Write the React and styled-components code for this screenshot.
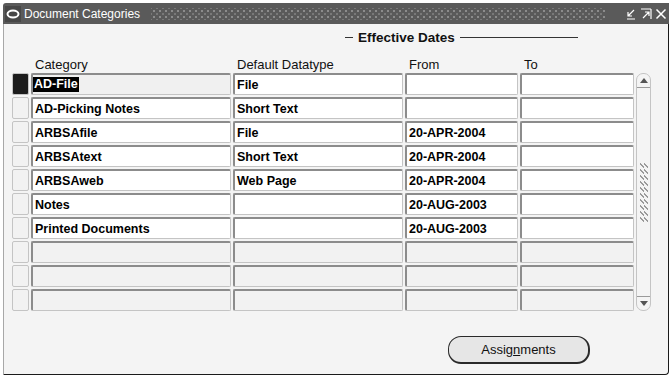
import React from "react";
import styled, { createGlobalStyle } from "styled-components";

const GlobalStyle = createGlobalStyle`
  html, body {
    margin: 0;
    padding: 0;
    background: #ffffff;
    font-family: "Liberation Sans", Arial, sans-serif;
  }
`;

const Page = styled.div`
  width: 672px;
  height: 377px;
  padding: 3px 3px 2px 3px;
  box-sizing: border-box;
  display: flex;
`;

const Window = styled.div`
  flex: 1;
  display: flex;
  flex-direction: column;
  border-top-left-radius: 3px;
  overflow: hidden;
`;

const TitleBar = styled.div`
  height: 21px;
  background: #5a5a5a;
  display: flex;
  align-items: center;
  padding: 0 2px 0 2px;
  gap: 3px;
  color: #ffffff;
`;

const AppIcon = styled.div`
  width: 16px;
  height: 16px;
  background: #474747;
  display: flex;
  align-items: center;
  justify-content: center;
`;

const Title = styled.span`
  font-size: 12px;
  white-space: nowrap;
`;

const Dots = styled.div`
  flex: 1;
  height: 12px;
  margin: 0 16px 0 8px;
  background-image: radial-gradient(circle, #a8a8a8 0.6px, transparent 0.9px),
    radial-gradient(circle, #8a8a8a 0.6px, transparent 0.9px);
  background-size: 6px 6px, 6px 6px;
  background-position: 0 0, 3px 3px;
`;

const TitleButtons = styled.div`
  display: flex;
  gap: 3px;
  align-items: center;
`;

const Body = styled.div`
  flex: 1;
  background: #f4f4f4;
  border-left: 1px solid #a8a8a8;
  border-right: 1px solid #1a1a1a;
  border-bottom: 1px solid #1a1a1a;
  border-bottom-right-radius: 4px;
  display: flex;
  flex-direction: column;
  padding: 6px 0 0 8px;
`;

const GroupHeader = styled.div`
  display: flex;
  align-items: center;
  margin-left: 333px;
  height: 14px;
  gap: 5px;
  font-size: 13.5px;
  font-weight: bold;
  color: #111;
`;

const Rule = styled.span`
  display: block;
  width: ${(p) => p.w}px;
  height: 1px;
  background: #333;
`;

const HeaderRow = styled.div`
  display: grid;
  grid-template-columns: 17px 200px 170px 113px 114px;
  column-gap: 2px;
  margin-top: 13px;
  height: 16px;
  font-size: 13px;
  color: #111;
`;

const HeaderCell = styled.div`
  padding-left: 4px;
  line-height: 16px;
`;

const TableArea = styled.div`
  display: flex;
  gap: 2px;
`;

const Rows = styled.div`
  display: flex;
  flex-direction: column;
  gap: 2px;
`;

const Row = styled.div`
  display: grid;
  grid-template-columns: 17px 200px 170px 113px 114px;
  column-gap: 2px;
  height: 22px;
`;

const Indicator = styled.div`
  box-sizing: border-box;
  border: 1px solid #c4c4c4;
  border-radius: 2px;
  background: ${(p) => (p.current ? "#1c1c1c" : "#f2f2f2")};
`;

const Field = styled.div`
  box-sizing: border-box;
  background: ${(p) => (p.empty ? "#f2f2f2" : p.current ? "#f0f0f0" : "#ffffff")};
  border-top: 2px solid #8c8c8c;
  border-left: 2px solid #8c8c8c;
  border-bottom: 1px solid #c4c4c4;
  border-right: 1px solid #c4c4c4;
  border-radius: 2px;
  font-size: 12.5px;
  font-weight: bold;
  color: #000;
  padding-left: ${(p) => (p.current ? 0 : 2)}px;
  display: flex;
  align-items: center;
  white-space: nowrap;
  overflow: hidden;
`;

const Selected = styled.span`
  background: #000;
  color: #fff;
  padding: 0 1px;
  line-height: 15px;
`;

const Scrollbar = styled.div`
  width: 15px;
  box-sizing: border-box;
  border: 1px solid #c4c4c4;
  border-radius: 7px;
  display: flex;
  flex-direction: column;
  align-items: center;
  justify-content: space-between;
`;

const ScrollEnd = styled.div`
  width: 100%;
  height: 13px;
  display: flex;
  align-items: center;
  justify-content: center;
  border-${(p) => (p.top ? "bottom" : "top")}: 1px solid #9a9a9a;
`;

const Grip = styled.div`
  width: 8px;
  height: 60px;
  background-image: linear-gradient(45deg, transparent 40%, #9a9a9a 40%, #9a9a9a 60%, transparent 60%);
  background-size: 4px 6px;
`;

const ButtonRow = styled.div`
  display: flex;
  justify-content: flex-start;
  padding-left: 436px;
  margin-top: 25px;
`;

const Button = styled.div`
  width: 142px;
  height: 28px;
  box-sizing: border-box;
  border: 1px solid #2a2a2a;
  border-right-width: 2px;
  border-bottom-width: 2px;
  border-radius: 13px;
  background: #e6e6e6;
  display: flex;
  align-items: center;
  justify-content: center;
  font-size: 13px;
  color: #111;
  u {
    text-decoration-thickness: 1px;
  }
`;

const data = [
  ["AD-File", "File", "", ""],
  ["AD-Picking Notes", "Short Text", "", ""],
  ["ARBSAfile", "File", "20-APR-2004", ""],
  ["ARBSAtext", "Short Text", "20-APR-2004", ""],
  ["ARBSAweb", "Web Page", "20-APR-2004", ""],
  ["Notes", "", "20-AUG-2003", ""],
  ["Printed Documents", "", "20-AUG-2003", ""],
  null,
  null,
  null,
];

const Ico = ({ children }) => (
  <svg width="12" height="12" viewBox="0 0 12 12" fill="none" stroke="#fff" strokeWidth="1.2">
    {children}
  </svg>
);

export default function App() {
  return (
    <>
      <GlobalStyle />
      <Page>
        <Window>
          <TitleBar>
            <AppIcon>
              <svg width="14" height="10" viewBox="0 0 14 10">
                <ellipse cx="7" cy="5" rx="5.5" ry="3.5" fill="none" stroke="#fff" strokeWidth="2" />
              </svg>
            </AppIcon>
            <Title>Document Categories</Title>
            <Dots />
            <TitleButtons>
              <Ico>
                <path d="M9 2 L3 8 M3 4 V8 H7 M2 11 H10" />
              </Ico>
              <Ico>
                <path d="M3 10 L9 4 M5 4 H9 V8 M11 1 V11 M1 1 H11" />
              </Ico>
              <Ico>
                <path d="M1.5 1.5 L10.5 10.5 M10.5 1.5 L1.5 10.5" strokeWidth="1.5" />
              </Ico>
            </TitleButtons>
          </TitleBar>
          <Body>
            <GroupHeader>
              <Rule w={8} />
              <span>Effective Dates</span>
              <Rule w={118} />
            </GroupHeader>
            <HeaderRow>
              <span />
              <HeaderCell>Category</HeaderCell>
              <HeaderCell>Default Datatype</HeaderCell>
              <HeaderCell>From</HeaderCell>
              <HeaderCell>To</HeaderCell>
            </HeaderRow>
            <TableArea>
              <Rows>
                {data.map((r, i) => (
                  <Row key={i}>
                    <Indicator current={i === 0} />
                    {r ? (
                      <>
                        <Field current={i === 0}>
                          {i === 0 ? <Selected>{r[0]}</Selected> : r[0]}
                        </Field>
                        <Field>{r[1]}</Field>
                        <Field>{r[2]}</Field>
                        <Field>{r[3]}</Field>
                      </>
                    ) : (
                      <>
                        <Field empty />
                        <Field empty />
                        <Field empty />
                        <Field empty />
                      </>
                    )}
                  </Row>
                ))}
              </Rows>
              <Scrollbar>
                <ScrollEnd top>
                  <svg width="8" height="5" viewBox="0 0 8 5">
                    <path d="M0 5 L4 0 L8 5 Z" fill="#555" />
                  </svg>
                </ScrollEnd>
                <Grip />
                <ScrollEnd>
                  <svg width="8" height="5" viewBox="0 0 8 5">
                    <path d="M0 0 L4 5 L8 0 Z" fill="#555" />
                  </svg>
                </ScrollEnd>
              </Scrollbar>
            </TableArea>
            <ButtonRow>
              <Button>
                <span>
                  Assig<u>n</u>ments
                </span>
              </Button>
            </ButtonRow>
          </Body>
        </Window>
      </Page>
    </>
  );
}
